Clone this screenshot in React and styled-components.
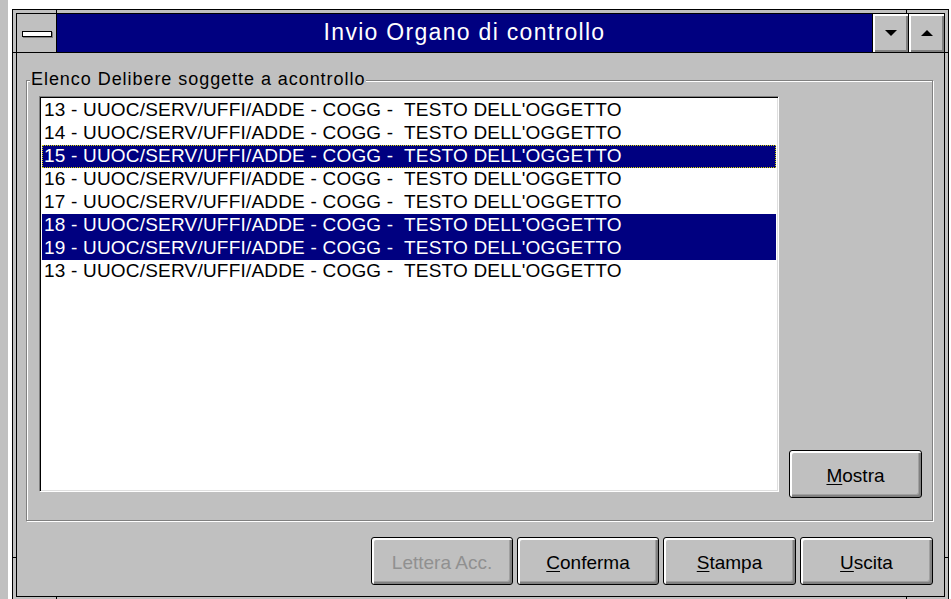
import React from "react";
import styled, { createGlobalStyle } from "styled-components";

const GlobalStyle = createGlobalStyle`
  html, body {
    margin: 0;
    padding: 0;
    background: #ffffff;
  }
  body {
    font-family: "Liberation Sans", Arial, sans-serif;
  }
`;

const Desktop = styled.div`
  width: 951px;
  height: 599px;
  overflow: hidden;
  padding: 9px 0 0 12px;
  box-sizing: border-box;
  background: linear-gradient(to right, #c0c0c0 8px, #ffffff 8px);
`;

const Window = styled.div`
  position: relative;
  width: 937px;
  height: 592px;
  box-sizing: border-box;
  border: 1px solid #000;
  padding: 3px;
  background: #c0c0c0;
`;

// little notches in the sizing border
const Notch = styled.span`
  position: absolute;
  background: #000;
  ${(p) =>
    p.$vertical
      ? `width: 1px; height: 4px; left: ${p.$x}px; ${p.$bottom ? "bottom: 0;" : "top: 0;"}`
      : `height: 1px; width: 4px; top: ${p.$y}px; ${p.$right ? "right: 0;" : "left: 0;"}`}
`;

const Frame = styled.div`
  height: 100%;
  box-sizing: border-box;
  border: 1px solid #000;
  display: flex;
  flex-direction: column;
`;

const TitleBar = styled.div`
  height: 39px;
  box-sizing: border-box;
  border-bottom: 1px solid #000;
  display: flex;
`;

const MenuBox = styled.div`
  width: 40px;
  box-sizing: border-box;
  border-right: 1px solid #000;
  background: #c0c0c0;
  display: flex;
  align-items: center;
  justify-content: center;
`;

const MenuBar = styled.div`
  width: 28px;
  height: 4px;
  background: #fff;
  border: 1px solid #000;
  box-shadow: 1px 1px 0 #808080;
  margin-top: 1px;
`;

const Caption = styled.div`
  flex: 1;
  background: #000080;
  color: #fff;
  display: flex;
  align-items: center;
  justify-content: center;
  font-size: 23px;
  letter-spacing: 1.3px;
  padding-bottom: 1px;
`;

const SizeButton = styled.div`
  width: 36px;
  box-sizing: border-box;
  border-left: 1px solid #000;
  background: #c0c0c0;
  box-shadow: inset 1px 1px 0 #fff, inset 2px 2px 0 #fff, inset -1px -1px 0 #808080,
    inset -2px -2px 0 #808080;
  display: flex;
  align-items: center;
  justify-content: center;
`;

const Arrow = styled.span`
  width: 0;
  height: 0;
  border-left: 6px solid transparent;
  border-right: 6px solid transparent;
  ${(p) =>
    p.$up ? "border-bottom: 6px solid #000;" : "border-top: 6px solid #000;"}
`;

const Client = styled.div`
  flex: 1;
  padding: 27px 11px 0 9px;
  display: flex;
  flex-direction: column;
`;

const Group = styled.div`
  position: relative;
  height: 441px;
  box-sizing: border-box;
  border: 1px solid #808080;
  box-shadow: 1px 1px 0 #fff, inset 1px 1px 0 #fff;
  padding: 15px 10px 22px 12px;
  display: flex;
  align-items: flex-start;
`;

const GroupLabel = styled.span`
  position: absolute;
  top: -12px;
  left: 3px;
  padding: 0 1px;
  background: #c0c0c0;
  color: #000;
  font-size: 18px;
  letter-spacing: 0.95px;
  line-height: 20px;
`;

const ListBox = styled.div`
  width: 740px;
  height: 396px;
  box-sizing: border-box;
  background: #fff;
  border-top: 1px solid #808080;
  border-left: 1px solid #808080;
  border-right: 1px solid #fff;
  border-bottom: 1px solid #fff;
  box-shadow: inset 1px 1px 0 #000, inset -1px -1px 0 #dfdfdf;
  padding: 2px 2px 0 2px;
  overflow: hidden;
`;

const Row = styled.div`
  height: 23px;
  line-height: 21px;
  box-sizing: border-box;
  padding-left: 2px;
  white-space: pre;
  font-size: 19px;
  letter-spacing: 0.2px;
  background: ${(p) => (p.$selected ? "#000080" : "transparent")};
  color: ${(p) => (p.$selected ? "#fff" : "#000")};
  outline: ${(p) => (p.$focused ? "1px dotted #d8d800" : "none")};
  outline-offset: -1px;
`;

const Button = styled.button`
  width: ${(p) => p.$w || 133}px;
  height: 48px;
  box-sizing: border-box;
  border: 1px solid #000;
  border-radius: 3px;
  background: #c0c0c0;
  box-shadow: inset 1px 1px 0 #fff, inset 2px 2px 0 #fff, inset -1px -1px 0 #808080,
    inset -2px -2px 0 #808080, inset -3px -3px 0 #a0a0a0;
  font-family: "Liberation Sans", Arial, sans-serif;
  font-size: 19px;
  color: ${(p) => (p.disabled ? "#909090" : "#000")};
  padding: 3px 0 0 0;
  cursor: default;
`;

const Side = styled.div`
  margin-left: auto;
  align-self: flex-end;
  display: flex;
`;

const Footer = styled.div`
  margin-top: 16px;
  display: flex;
  justify-content: flex-end;
  gap: 4px;
`;

const Key = styled.span`
  text-decoration: underline;
  text-underline-offset: 2px;
`;

const rows = [
  { n: 13 },
  { n: 14 },
  { n: 15, selected: true, focused: true },
  { n: 16 },
  { n: 17 },
  { n: 18, selected: true },
  { n: 19, selected: true },
  { n: 13 },
];

const Label = ({ text }) => (
  <>
    <Key>{text[0]}</Key>
    {text.slice(1)}
  </>
);

export default function App() {
  return (
    <>
      <GlobalStyle />
      <Desktop>
        <Window>
          <Notch $vertical $x={43} />
          <Notch $vertical $x={893} />
          <Notch $vertical $bottom $x={43} />
          <Notch $vertical $bottom $x={893} />
          <Notch $y={42} />
          <Notch $y={42} $right />
          <Notch $y={547} />
          <Notch $y={547} $right />
          <Frame>
            <TitleBar>
              <MenuBox>
                <MenuBar />
              </MenuBox>
              <Caption>Invio Organo di controllo</Caption>
              <SizeButton>
                <Arrow />
              </SizeButton>
              <SizeButton>
                <Arrow $up />
              </SizeButton>
            </TitleBar>
            <Client>
              <Group>
                <GroupLabel>Elenco Delibere soggette a acontrollo</GroupLabel>
                <ListBox>
                  {rows.map((r, i) => (
                    <Row key={i} $selected={r.selected} $focused={r.focused}>
                      {`${r.n} - UUOC/SERV/UFFI/ADDE - COGG -  TESTO DELL'OGGETTO`}
                    </Row>
                  ))}
                </ListBox>
                <Side>
                  <Button $w={133}>
                    <Label text="Mostra" />
                  </Button>
                </Side>
              </Group>
              <Footer>
                <Button $w={142} disabled>
                  Lettera Acc.
                </Button>
                <Button $w={142}>
                  <Label text="Conferma" />
                </Button>
                <Button $w={133}>
                  <Label text="Stampa" />
                </Button>
                <Button $w={133}>
                  <Label text="Uscita" />
                </Button>
              </Footer>
            </Client>
          </Frame>
        </Window>
      </Desktop>
    </>
  );
}
